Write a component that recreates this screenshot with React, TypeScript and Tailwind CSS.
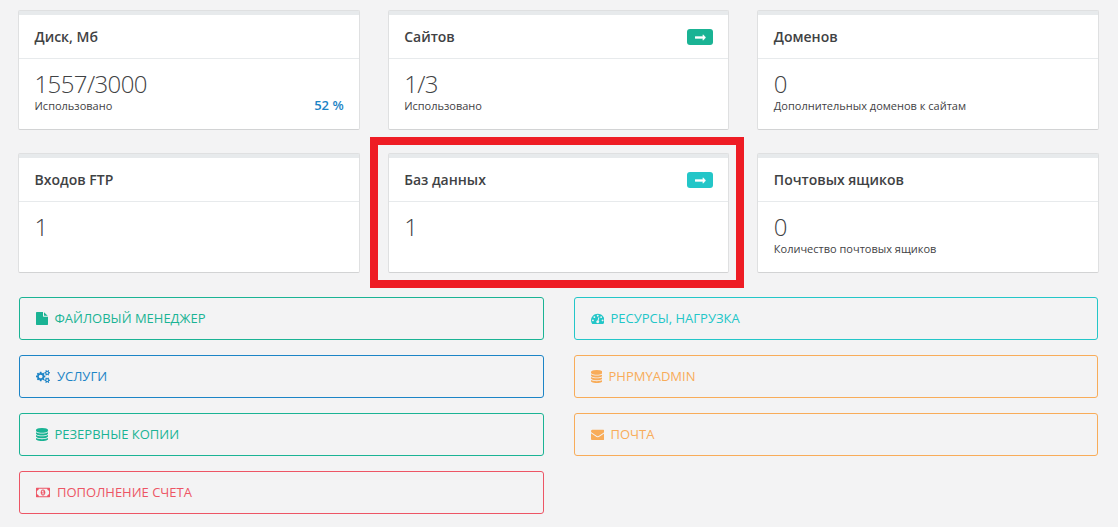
import type { ReactNode } from "react";

const SMALL_GEAR =
  "v140q0 16-149 31-12 27-30 52 51 113 51 138 0 4-4 7-122 71-124 71-8 0-46-47t-52-68q-20 2-30 2t-30-2q-14 21-52 68t-46 47q-2 0-124-71-4-3-4-7 0-25 51-138-18-25-30-52-149-15-149-31v-140q0-16 149-31 13-29 30-52-51-113-51-138 0-4 4-7 4-2 35-20t59-34 30-16q8 0 46 46.5t52 67.5q20-2 30-2t30 2q51-71 92-112l6-2q4 0 124 70 4 3 4 7 0 25-51 138 17 23 30 52 149 15 149 31z";

const ICONS = {
  file: {
    box: "128 0 1536 1792",
    d: "M1152 512v-472q22 14 36 28l408 408q14 14 28 36h-472zm-128 32q0 40 28 68t68 28h544v1056q0 40-28 68t-68 28h-1344q-40 0-68-28t-28-68v-1600q0-40 28-68t68-28h800v544z",
  },
  cogs: {
    box: "0 0 1920 1792",
    d:
      "M896 896q0-106-75-181t-181-75-181 75-75 181 75 181 181 75 181-75 75-181zm768 512q0-52-38-90t-90-38-90 38-38 90q0 53 37.5 90.5t90.5 37.5 90.5-37.5 37.5-90.5zm0-1024q0-52-38-90t-90-38-90 38-38 90q0 53 37.5 90.5t90.5 37.5 90.5-37.5 37.5-90.5zm-384 421v185q0 10-7 19.5t-16 10.5l-155 24q-11 35-32 76 34 48 90 115 7 11 7 20 0 12-7 19-23 30-82.5 89.5t-78.5 59.5q-11 0-21-7l-115-90q-37 19-77 31-11 108-23 155-7 24-30 24h-186q-11 0-20-7.5t-10-17.5l-23-153q-34-10-75-31l-118 89q-7 7-20 7-11 0-21-8-144-133-144-160 0-9 7-19 10-14 41-53t47-61q-23-44-35-82l-152-24q-10-1-17-9.5t-7-19.5v-185q0-10 7-19.5t16-10.5l155-24q11-35 32-76-34-48-90-115-7-11-7-20 0-12 7-20 22-30 82-89t79-59q11 0 21 7l115 90q34-18 77-32 11-108 23-154 7-24 30-24h186q11 0 20 7.5t10 17.5l23 153q34 10 75 31l118-89q8-7 20-7 11 0 21 8 144 133 144 160 0 8-7 19-12 16-42 54t-45 60q23 48 34 82l152 23q10 2 17 10.5t7 19.5z" +
      "M1920 1338" + SMALL_GEAR + "M1920 314" + SMALL_GEAR,
  },
  database: {
    box: "128 0 1536 1792",
    d: "M896 768q237 0 443-43t325-127v170q0 69-103 128t-280 93.5-385 34.5-385-34.5-280-93.5-103-128v-170q119 84 325 127t443 43zm0 768q237 0 443-43t325-127v170q0 69-103 128t-280 93.5-385 34.5-385-34.5-280-93.5-103-128v-170q119 84 325 127t443 43zm0-384q237 0 443-43t325-127v170q0 69-103 128t-280 93.5-385 34.5-385-34.5-280-93.5-103-128v-170q119 84 325 127t443 43zm0-1152q208 0 385 34.5t280 93.5 103 128v128q0 69-103 128t-280 93.5-385 34.5-385-34.5-280-93.5-103-128v-128q0-69 103-128t280-93.5 385-34.5z",
  },
  money: {
    box: "0 0 1920 1792",
    d: "M768 1152h384v-96h-128v-448h-114l-148 137 77 80q42-37 55-57h2v288h-128v96zm512-256q0 70-21 142t-59.5 134-101.5 101-138 39-138-39-101.5-101-59.5-134-21-142 21-142 59.5-134 101.5-101 138-39 138 39 101.5 101 59.5 134 21 142zm512 256v-512q-106 0-181-75t-75-181h-1152q0 106-75 181t-181 75v512q106 0 181 75t75 181h1152q0-106 75-181t181-75zm128-832v1152q0 26-19 45t-45 19h-1792q-26 0-45-19t-19-45v-1152q0-26 19-45t45-19h1792q26 0 45 19t19 45z",
  },
  gauge: {
    box: "0 0 1792 1792",
    d: "M384 1152q0-53-37.5-90.5t-90.5-37.5-90.5 37.5-37.5 90.5 37.5 90.5 90.5 37.5 90.5-37.5 37.5-90.5zm192-448q0-53-37.5-90.5t-90.5-37.5-90.5 37.5-37.5 90.5 37.5 90.5 90.5 37.5 90.5-37.5 37.5-90.5zm428 481l101-382q6-26-7.5-48.5t-38.5-29.5-48 6.5-30 39.5l-101 382q-60 5-107 43.5t-63 98.5q-20 77 20 146t117 89 146-20 89-117q16-60-6-117t-72-91zm660-33q0-53-37.5-90.5t-90.5-37.5-90.5 37.5-37.5 90.5 37.5 90.5 90.5 37.5 90.5-37.5 37.5-90.5zm-640-640q0-53-37.5-90.5t-90.5-37.5-90.5 37.5-37.5 90.5 37.5 90.5 90.5 37.5 90.5-37.5 37.5-90.5zm448 192q0-53-37.5-90.5t-90.5-37.5-90.5 37.5-37.5 90.5 37.5 90.5 90.5 37.5 90.5-37.5 37.5-90.5zm320 448q0 261-141 483-19 29-54 29h-1402q-35 0-54-29-141-221-141-483 0-182 71-348t191-286 286-191 348-71 348 71 286 191 191 286 71 348z",
  },
  envelope: {
    box: "0 0 1792 1792",
    d: "M1792 710v794q0 66-47 113t-113 47h-1472q-66 0-113-47t-47-113v-794q44 49 101 87 362 246 497 345 57 42 92.5 65.5t94.5 48 110 24.5h2q51 0 110-24.5t94.5-48 92.5-65.5q170-123 498-345 57-39 100-87zm0-294q0 79-49 151t-122 123q-376 261-468 325-10 7-42.5 31t-54 38.5-52 32.5-57.5 27-50 9h-2q-23 0-50-9t-57.5-27-52-32.5-54-38.5-42.5-31q-91-64-262-182.5t-205-142.5q-62-42-117-115.5t-55-136.5q0-78 41.5-130t118.5-52h1472q65 0 112.5 47t47.5 113z",
  },
  arrow: {
    box: "0 0 1792 1792",
    d: "M1728 893q0 14-10 24l-384 354q-16 14-35 6-19-9-19-29v-224h-1248q-14 0-23-9t-9-23v-192q0-14 9-23t23-9h1248v-224q0-21 19-29t35 5l384 350q10 10 10 23z",
  },
};

type IconName = keyof typeof ICONS;

function Icon({ name, className }: { name: IconName; className: string }) {
  return (
    <svg
      viewBox={ICONS[name].box}
      preserveAspectRatio="none"
      className={`shrink-0 fill-current ${className}`}
      aria-hidden="true"
    >
      <path d={ICONS[name].d} />
    </svg>
  );
}

type CardProps = {
  title: string;
  value: string;
  note?: string;
  percent?: string;
  badge?: string;
  children?: ReactNode;
};

function Card({ title, value, note, percent, badge, children }: CardProps) {
  return (
    <section className="relative h-[120px] rounded-[2px] border border-[#dfe0e1] border-b-[#d2d3d4] bg-white">
      <div className="h-1 bg-[#e7eaec]" />
      <header className="flex h-11 items-center justify-between border-b border-[#e7eaec] pr-[15px] pl-[15.5px]">
        <h5 className="text-[14px] leading-5 font-semibold">{title}</h5>
        {badge && (
          <span className={`flex h-4 w-[26px] items-center justify-center rounded-[3px] text-white ${badge}`}>
            <Icon name="arrow" className="mt-px h-[13px] w-[11px] stroke-white stroke-[60]" />
          </span>
        )}
      </header>
      <div className="pt-[11px] pr-[15px] pl-[15.5px]">
        <div className="text-[24px] leading-[28px] font-light tracking-[-0.6px]">{value}</div>
        <div className="flex h-4 items-start justify-between">
          <span className="text-[11px] leading-4">{note}</span>
          <span className="text-[13px] leading-[15px] font-semibold text-[#1c84c6]">{percent}</span>
        </div>
      </div>
      {children}
    </section>
  );
}

function ActionButton({ icon, size, color, label }: { icon: IconName; size: string; color: string; label: string }) {
  return (
    <button
      type="button"
      className={`flex h-[43px] items-center rounded-[3px] border text-left text-[13px] leading-5 ${color}`}
    >
      <Icon name={icon} className={`h-[13px] ${size}`} />
      <span className="pb-0.5">{label}</span>
    </button>
  );
}

export default function App() {
  return (
    <main className="h-[527px] w-[1118px] overflow-hidden bg-[#f3f3f4] pt-[10px] font-['Open_Sans','Noto_Sans',sans-serif] text-[#3f4244]">
      <div className="mr-[19px] ml-[18px] grid grid-cols-3 gap-x-7 gap-y-[23px]">
        <Card title="Диск, Мб" value="1557/3000" note="Использовано" percent="52 %" />
        <Card title="Сайтов" value="1/3" note="Использовано" badge="bg-[#1ab394]" />
        <Card title="Доменов" value="0" note="Дополнительных доменов к сайтам" />
        <Card title="Входов FTP" value="1" />
        <Card title="Баз данных" value="1" badge="bg-[#23c6c8]">
          <div className="pointer-events-none absolute -top-[17px] -right-4 -bottom-4 -left-[19px] border-8 border-[#ee1c24]" />
        </Card>
        <Card title="Почтовых ящиков" value="0" note="Количество почтовых ящиков" />
      </div>
      <div className="mt-6 mr-5 ml-[19px] grid grid-cols-[525px_524px] gap-x-[30px]">
        <div className="flex flex-col gap-[15px]">
          <ActionButton icon="file" size="ml-4 mr-[6.5px] w-3" color="border-[#1ab394] text-[#1ab394]" label="ФАЙЛОВЫЙ МЕНЕДЖЕР" />
          <ActionButton icon="cogs" size="ml-4 mr-[7px] w-[14px]" color="border-[#1c84c6] text-[#1c84c6]" label="УСЛУГИ" />
          <ActionButton icon="database" size="ml-4 mr-[6.5px] w-3" color="border-[#1ab394] text-[#1ab394]" label="РЕЗЕРВНЫЕ КОПИИ" />
          <ActionButton icon="money" size="ml-4 mr-[7px] w-[14px]" color="border-[#ed5565] text-[#ed5565]" label="ПОПОЛНЕНИЕ СЧЕТА" />
        </div>
        <div className="flex flex-col gap-[15px]">
          <ActionButton icon="gauge" size="ml-[15.5px] mr-[6.5px] w-[13.5px]" color="border-[#23c6c8] text-[#23c6c8]" label="РЕСУРСЫ, НАГРУЗКА" />
          <ActionButton icon="database" size="ml-[15.5px] mr-[6.5px] w-[11.5px]" color="border-[#f8ac59] text-[#f8ac59]" label="PHPMYADMIN" />
          <ActionButton icon="envelope" size="ml-[15.5px] mr-[6.5px] w-[13.5px]" color="border-[#f8ac59] text-[#f8ac59]" label="ПОЧТА" />
        </div>
      </div>
    </main>
  );
}
